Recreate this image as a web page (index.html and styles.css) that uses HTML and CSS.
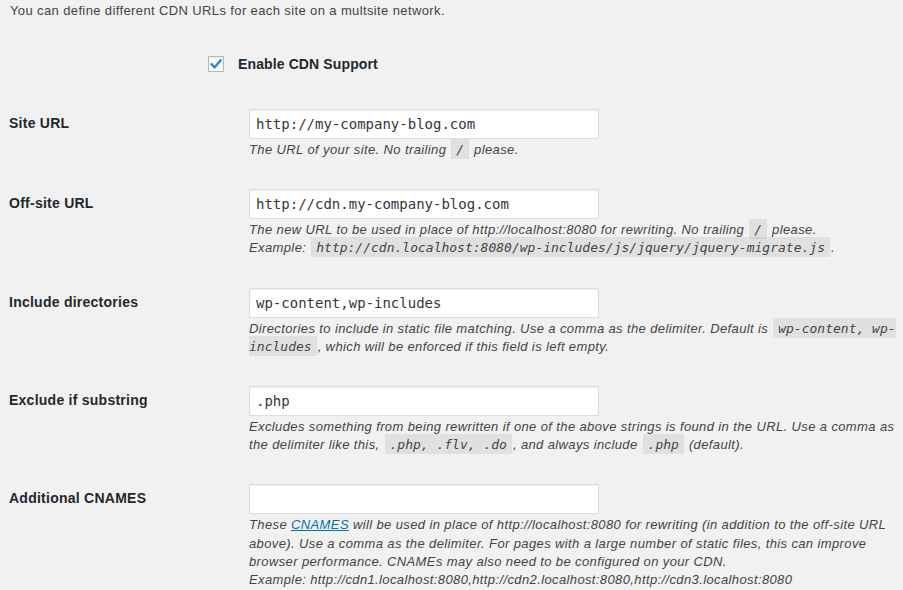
FILE: index.html
```html
<!DOCTYPE html>
<html lang="en">
<head>
<meta charset="utf-8">
<title>CDN Settings</title>
<link rel="stylesheet" href="styles.css">
</head>
<body>
<p class="intro">You can define different CDN URLs for each site on a multsite network.</p>

<div class="enable-row">
  <span class="checkbox">
    <svg viewBox="0 0 16 16" width="16" height="16" aria-hidden="true"><path d="M3.6 8.2 L6.6 11.2 L12.6 4.4" fill="none" stroke="#1e8cbe" stroke-width="2.3" stroke-linecap="square"/></svg>
  </span>
  <label class="enable-label">Enable CDN Support</label>
</div>

<div class="form-table">
  <div class="row">
    <div class="th">Site URL</div>
    <div class="td">
      <div class="input">http://my-company-blog.com</div>
      <p class="description">The URL of your site. No trailing <code>/</code> please.</p>
    </div>
  </div>

  <div class="row">
    <div class="th">Off-site URL</div>
    <div class="td">
      <div class="input">http://cdn.my-company-blog.com</div>
      <p class="description">The new URL to be used in place of http://localhost:8080 for rewriting. No trailing <code>/</code> please.<br>Example: <code>http://cdn.localhost:8080/wp-includes/js/jquery/jquery-migrate.js</code>.</p>
    </div>
  </div>

  <div class="row">
    <div class="th">Include directories</div>
    <div class="td">
      <div class="input">wp-content,wp-includes</div>
      <p class="description">Directories to include in static file matching. Use a comma as the delimiter. Default is <code>wp-content, wp-includes</code>, which will be enforced if this field is left empty.</p>
    </div>
  </div>

  <div class="row">
    <div class="th">Exclude if substring</div>
    <div class="td">
      <div class="input">.php</div>
      <p class="description">Excludes something from being rewritten if one of the above strings is found in the URL. Use a comma as the delimiter like this, <code>.php, .flv, .do</code>, and always include <code>.php</code> (default).</p>
    </div>
  </div>

  <div class="row">
    <div class="th">Additional CNAMES</div>
    <div class="td">
      <div class="input"></div>
      <p class="description">These <a href="#">CNAMES</a> will be used in place of http://localhost:8080 for rewriting (in addition to the off-site URL above). Use a comma as the delimiter. For pages with a large number of static files, this can improve browser performance. CNAMEs may also need to be configured on your CDN.<br>Example: http://cdn1.localhost:8080,http://cdn2.localhost:8080,http://cdn3.localhost:8080</p>
    </div>
  </div>
</div>
</body>
</html>
```

FILE: styles.css
```css
html, body {
  margin: 0;
  padding: 0;
}

body {
  background: #f1f1f1;
  color: #444;
  font-family: "Liberation Sans", Arial, sans-serif;
  font-size: 13px;
  line-height: 1.4em;
  letter-spacing: 0.38px;
  padding: 0 3px 0 9px;
}

.intro {
  margin: 0;
  padding-top: 2px;
  padding-left: 1px;
  line-height: 18px;
}

.enable-row {
  display: flex;
  align-items: center;
  height: 16px;
  margin-top: 36px;
  padding-left: 199px;
}

.checkbox {
  box-sizing: border-box;
  width: 16px;
  height: 16px;
  border: 1px solid #b4b9be;
  background: #fff;
  box-shadow: inset 0 1px 2px rgba(0, 0, 0, 0.1);
  display: flex;
  align-items: center;
  justify-content: center;
}

.checkbox svg {
  display: block;
  margin: -1px;
}

.enable-label {
  margin-left: 14px;
  font-size: 14px;
  font-weight: 700;
  letter-spacing: 0.12px;
  color: #23282d;
}

.form-table {
  margin-top: 22px;
}

.row {
  display: grid;
  grid-template-columns: 240px 1fr;
  padding: 15px 0;
}

.th {
  padding-top: 5px;
  font-size: 14px;
  line-height: 1.3;
  font-weight: 700;
  letter-spacing: 0.25px;
  color: #23282d;
}

.input {
  box-sizing: border-box;
  width: 350px;
  height: 30px;
  border: 1px solid #ddd;
  background: #fff;
  box-shadow: inset 0 1px 2px rgba(0, 0, 0, 0.07);
  padding: 0 6px;
  font-family: "DejaVu Sans Mono", "Liberation Mono", monospace;
  font-size: 14px;
  line-height: 28px;
  letter-spacing: 0;
  color: #32373c;
}

.description {
  margin: 2px 0 0;
  font-style: italic;
  color: #444;
  line-height: 18.2px;
}

.description code {
  font-family: "DejaVu Sans Mono", "Liberation Mono", monospace;
  font-size: 13px;
  line-height: 1;
  letter-spacing: 0;
  background: rgba(0, 0, 0, 0.07);
  padding: 3px 5px 2px;
  margin: 0 1px;
  color: #444;
}

.description a {
  color: #0073aa;
  text-decoration: underline;
}
```
